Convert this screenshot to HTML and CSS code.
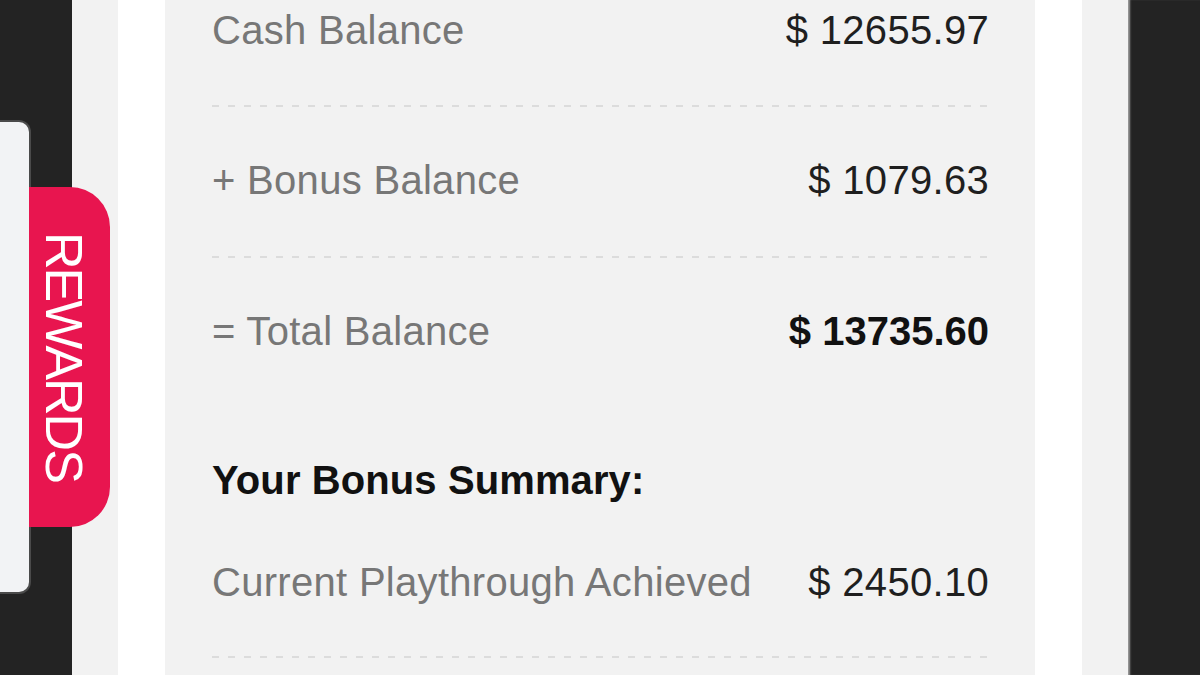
FILE: index.html
```html
<!DOCTYPE html>
<html>
<head>
<meta charset="utf-8">
<link rel="stylesheet" href="styles.css">
</head>
<body>
<div class="screen">
  <div class="side side-left"></div>
  <div class="page">
    <div class="sheet">
      <div class="card">
        <div class="row row-first">
          <span class="label">Cash Balance</span>
          <span class="value">$ 12655.97</span>
        </div>
        <div class="divider"></div>
        <div class="row">
          <span class="label">+ Bonus Balance</span>
          <span class="value">$ 1079.63</span>
        </div>
        <div class="divider"></div>
        <div class="row row-total">
          <span class="label">= Total Balance</span>
          <span class="value value-bold">$ 13735.60</span>
        </div>
        <h2 class="heading">Your Bonus Summary:</h2>
        <div class="row row-summary">
          <span class="label">Current Playthrough Achieved</span>
          <span class="value">$ 2450.10</span>
        </div>
        <div class="divider"></div>
      </div>
    </div>
  </div>
  <div class="side side-right"></div>

  <div class="drawer"></div>
  <div class="rewards-tab"><span class="rewards-text">REWARDS</span></div>
</div>
</body>
</html>
```
FILE: styles.css
```css
* { box-sizing: border-box; }
html, body {
  margin: 0;
  padding: 0;
  width: 1200px;
  height: 675px;
  overflow: hidden;
  background: #232323;
  font-family: "Liberation Sans", Arial, sans-serif;
}
.screen {
  position: relative;
  display: flex;
  width: 1200px;
  height: 675px;
}
.side {
  flex: 0 0 72px;
  background: #232323;
}
.side-right {
  flex-basis: 72px;
  box-shadow: inset 3px 0 2px -1px #9a9a9a;
}
.page {
  flex: 1 1 auto;
  background: #f2f2f2;
  padding: 0 46px 0 46px;
  display: flex;
}
.sheet {
  flex: 1 1 auto;
  background: #ffffff;
  padding: 0 47px;
  display: flex;
}
.card {
  flex: 1 1 auto;
  background: #f2f2f2;
  padding: 0 46px 0 47px;
  display: flex;
  flex-direction: column;
}
.row {
  display: flex;
  justify-content: space-between;
  align-items: center;
  padding: 50px 0 53px;
  font-size: 40px;
  line-height: 46px;
  letter-spacing: 0.3px;
}
.row-first { padding-top: 7px; padding-bottom: 52px; }
.row-total { padding-bottom: 51px; }
.row-summary { padding: 56px 0 51px; }
.label { color: #777777; }
.value { color: #1f1f1f; }
.value-bold { font-weight: bold; color: #111; letter-spacing: 0; }
.divider {
  height: 2px;
  background: repeating-linear-gradient(90deg, #dcdcdc 0 7px, transparent 7px 16px);
}
.heading {
  margin: 52px 0 0;
  font-size: 40px;
  line-height: 46px;
  font-weight: bold;
  color: #111;
  letter-spacing: 0.1px;
}
.drawer {
  position: absolute;
  left: -10px;
  top: 122px;
  width: 39px;
  height: 470px;
  background: #f2f3f5;
  border-radius: 0 10px 10px 0;
  box-shadow: 0 0 0 2px #4a4a4a;
}
.rewards-tab {
  position: absolute;
  left: 29px;
  top: 187px;
  width: 81px;
  height: 340px;
  background: #e8154f;
  border-radius: 0 40px 40px 0;
  display: flex;
  align-items: center;
  justify-content: center;
  padding-right: 12px;
}
.rewards-text {
  writing-mode: vertical-rl;
  color: #ffffff;
  font-size: 52px;
  line-height: 52px;
  letter-spacing: -2px;
}
```
